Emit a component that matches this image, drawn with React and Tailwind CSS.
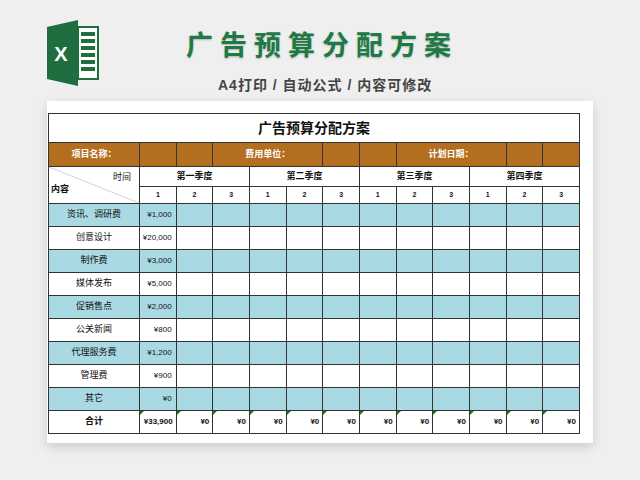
const rows = [
  ['资讯、调研费', '¥1,000'],
  ['创意设计', '¥20,000'],
  ['制作费', '¥3,000'],
  ['媒体发布', '¥5,000'],
  ['促销售点', '¥2,000'],
  ['公关新闻', '¥800'],
  ['代理服务费', '¥1,200'],
  ['管理费', '¥900'],
  ['其它', '¥0'],
]

const cell = 'border border-[#333] p-0'
const twelve = [0, 1, 2, 3, 4, 5, 6, 7, 8, 9, 10, 11]

export default function App() {
  return (
    <div className="w-[640px] h-[480px] bg-[#efefef] overflow-hidden relative" style={{ fontFamily: '"Liberation Sans", "Noto Sans CJK SC", sans-serif' }}>
      <svg className="absolute left-[47px] top-[20px]" width="54" height="66" viewBox="0 0 54 66">
        <path d="M0 7 L31 0 L31 66 L0 59 Z" fill="#1e6e3f" />
        <rect x="31" y="7" width="20" height="52" fill="#fff" stroke="#1e6e3f" strokeWidth="2" />
        {[12, 19, 26, 33, 40, 47].map((y) => (
          <rect key={y} x="34" y={y} width="14" height="4" fill="#1e6e3f" />
        ))}
        <text x="14" y="41" fill="#fff" fontSize="20" fontWeight="bold" textAnchor="middle" fontFamily="Liberation Sans">X</text>
      </svg>
      <div className="pt-[27px] pl-[186px] text-[27px] font-bold text-[#1d7a45] tracking-[7px] leading-[38px]" style={{ textShadow: '0 1px 2px rgba(0,0,0,0.25)' }}>广告预算分配方案</div>
      <div className="mt-[10px] pl-[218px] text-[14px] font-bold text-[#444] tracking-[1px]">A4打印 / 自动公式 / 内容可修改</div>
      <div className="absolute left-[47px] top-[101px] w-[546px] h-[342px] bg-white shadow-[0_4px_10px_rgba(0,0,0,0.15)] pt-[12px] pl-[1px]">
        <table className="border-collapse table-fixed text-[8px] text-[#111]" style={{ width: 532 }}>
          <colgroup>
            <col style={{ width: 91 }} />
            {twelve.map((i) => <col key={i} />)}
          </colgroup>
          <tbody>
            <tr className="h-[29px]">
              <td colSpan={13} className={cell + ' text-center text-[14px] font-bold'}>广告预算分配方案</td>
            </tr>
            <tr className="h-[24px] bg-[#b36f1f] text-white font-bold text-[9px]">
              <td className={cell + ' text-center'}>项目名称：</td>
              <td className={cell}></td>
              <td className={cell}></td>
              <td colSpan={3} className={cell + ' text-center'}>费用单位：</td>
              <td className={cell}></td>
              <td className={cell}></td>
              <td colSpan={3} className={cell + ' text-center'}>计划日期：</td>
              <td className={cell}></td>
              <td className={cell}></td>
            </tr>
            <tr className="h-[20px] font-bold text-[9px]">
              <td rowSpan={2} className={cell + ' relative'}>
                <svg className="absolute inset-0" width="100%" height="100%" preserveAspectRatio="none" viewBox="0 0 10 10">
                  <line x1="0" y1="0" x2="10" y2="10" stroke="#bbb" strokeWidth="0.1" />
                </svg>
                <span className="absolute right-[8px] top-[4px] font-normal">时间</span>
                <span className="absolute left-[2px] top-[16px]">内容</span>
              </td>
              {['第一季度', '第二季度', '第三季度', '第四季度'].map((q) => (
                <td key={q} colSpan={3} className={cell + ' text-center'}>{q}</td>
              ))}
            </tr>
            <tr className="h-[17px] text-[7px] font-bold">
              {twelve.map((i) => (
                <td key={i} className={cell + ' text-center'}>{(i % 3) + 1}</td>
              ))}
            </tr>
            {rows.map(([name, v], r) => (
              <tr key={name} className={'h-[23px] ' + (r % 2 === 0 ? 'bg-[#a9d9e2]' : 'bg-white')}>
                <td className={cell + ' text-center text-[9px]'}>{name}</td>
                <td className={cell + ' text-right pr-[4px]'}>{v}</td>
                {twelve.slice(1).map((i) => <td key={i} className={cell}></td>)}
              </tr>
            ))}
            <tr className="h-[23px] font-bold">
              <td className={cell + ' text-center text-[9px]'}>合计</td>
              {twelve.map((i) => (
                <td key={i} className={cell + ' text-right pr-[3px] relative'}>
                  <span className="absolute left-0 top-0 w-0 h-0 border-t-[4px] border-r-[4px] border-t-[#1a7a1a] border-r-transparent"></span>
                  {i === 0 ? '¥33,900' : '¥0'}
                </td>
              ))}
            </tr>
          </tbody>
        </table>
      </div>
    </div>
  )
}
